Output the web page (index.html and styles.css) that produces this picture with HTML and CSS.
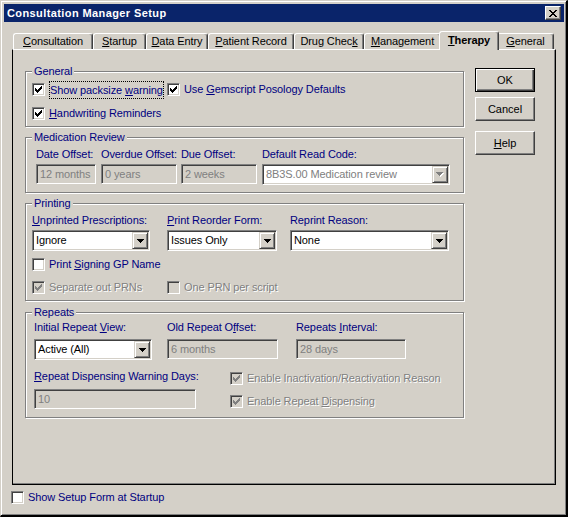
FILE: index.html
```html
<!doctype html>
<html>
<head>
<meta charset="utf-8">
<title>Consultation Manager Setup</title>
<link rel="stylesheet" href="styles.css">
</head>
<body>
<div class="window">
    <div class="titlebar">
        <span class="caption">Consultation Manager Setup</span>
        <span class="close"><svg class="glyph" width="8" height="7"><use href="#cross"/></svg></span>
    </div>

    <div class="tabs">
        <div class="tab"><u>C</u>onsultation</div>
        <div class="tab"><u>S</u>tartup</div>
        <div class="tab"><u>D</u>ata Entry</div>
        <div class="tab"><u>P</u>atient Record</div>
        <div class="tab">Drug Chec<u>k</u></div>
        <div class="tab"><u>M</u>anagement</div>
        <div class="tab active"><u>T</u>herapy</div>
        <div class="tab"><u>G</u>eneral</div>
    </div>

    <div class="panel">
        <div class="groups">
            <!-- General -->
            <fieldset class="group general">
                <legend>General</legend>
                <div class="row cols-135">
                    <div class="check"><span class="box"><svg class="glyph" width="7" height="7"><use href="#tick"/></svg></span><span class="focus">Show packsize <u>w</u>arning</span></div>
                    <div class="check"><span class="box"><svg class="glyph" width="7" height="7"><use href="#tick"/></svg></span><span>Use <u>G</u>emscript Posology Defaults</span></div>
                </div>
                <div class="row next">
                    <div class="check"><span class="box"><svg class="glyph" width="7" height="7"><use href="#tick"/></svg></span><span><u>H</u>andwriting Reminders</span></div>
                </div>
            </fieldset>

            <!-- Medication Review -->
            <fieldset class="group review">
                <legend>Medication Review</legend>
                <div class="fields review-cols">
                    <div class="field"><span class="label">Date Offset:</span><span class="edit off w60">12 months</span></div>
                    <div class="field"><span class="label">Overdue Offset:</span><span class="edit off w76">0 years</span></div>
                    <div class="field"><span class="label">Due Offset:</span><span class="edit off w76">2 weeks</span></div>
                    <div class="field">
                        <span class="label">Default Read Code:</span>
                        <span class="combo off w188">
                            <span class="value">8B3S.00 Medication review</span>
                            <span class="drop"><svg class="glyph" width="8" height="5"><use href="#arrow" class="shade"/><use href="#arrow"/></svg></span>
                        </span>
                    </div>
                </div>
            </fieldset>

            <!-- Printing -->
            <fieldset class="group printing">
                <legend>Printing</legend>
                <div class="fields printing-cols">
                    <div class="field">
                        <span class="label"><u>U</u>nprinted Prescriptions:</span>
                        <span class="combo w118"><span class="value">Ignore</span><span class="drop"><svg class="glyph" width="7" height="4"><use href="#arrow"/></svg></span></span>
                    </div>
                    <div class="field">
                        <span class="label"><u>P</u>rint Reorder Form:</span>
                        <span class="combo w110"><span class="value">Issues Only</span><span class="drop"><svg class="glyph" width="7" height="4"><use href="#arrow"/></svg></span></span>
                    </div>
                    <div class="field">
                        <span class="label">Reprint Reason:</span>
                        <span class="combo w159"><span class="value">None</span><span class="drop"><svg class="glyph" width="7" height="4"><use href="#arrow"/></svg></span></span>
                    </div>
                </div>
                <div class="row signing">
                    <div class="check"><span class="box"></span><span>Print <u>S</u>igning GP Name</span></div>
                </div>
                <div class="row cols-135 prn">
                    <div class="check off"><span class="box"><svg class="glyph" width="7" height="7"><use href="#tick"/></svg></span><span>Separate out PRNs</span></div>
                    <div class="check off"><span class="box"></span><span>One PRN per script</span></div>
                </div>
            </fieldset>

            <!-- Repeats -->
            <fieldset class="group repeats">
                <legend>Repeats</legend>
                <div class="fields repeats-cols">
                    <div class="field">
                        <span class="label">Initial Repeat <u>V</u>iew:</span>
                        <span class="combo w118"><span class="value">Active (All)</span><span class="drop"><svg class="glyph" width="7" height="4"><use href="#arrow"/></svg></span></span>
                    </div>
                    <div class="field"><span class="label">Old Repeat O<u>f</u>fset:</span><span class="edit off w111">6 months</span></div>
                    <div class="field"><span class="label">Repeats <u>I</u>nterval:</span><span class="edit off w110">28 days</span></div>
                </div>
                <div class="fields dispensing-cols">
                    <div class="field"><span class="label"><u>R</u>epeat Dispensing Warning Days:</span><span class="edit off w162">10</span></div>
                    <div class="checks">
                        <div class="check off"><span class="box"><svg class="glyph" width="7" height="7"><use href="#tick"/></svg></span><span>Enable Inactivation/Reactivation Reason</span></div>
                        <div class="check off"><span class="box"><svg class="glyph" width="7" height="7"><use href="#tick"/></svg></span><span>Enable Repeat <u>D</u>ispensing</span></div>
                    </div>
                </div>
            </fieldset>
        </div>

        <div class="buttons">
            <div class="btn default">OK</div>
            <div class="btn">Cancel</div>
            <div class="btn help"><span><u>H</u>elp</span></div>
        </div>
    </div>

    <div class="check startup"><span class="box"></span><span>Show Setup Form at Startup</span></div>
</div>

<svg class="defs">
    <symbol id="tick" viewBox="0 0 7 7"><path d="M0 2h1v3H0z M1 3h1v3H1z M2 4h1v3H2z M3 3h1v3H3z M4 2h1v3H4z M5 1h1v3H5z M6 0h1v3H6z"/></symbol>
    <symbol id="arrow" viewBox="0 0 7 4" width="7" height="4"><path d="M0 0h7v1H6v1H5v1H4v1H3V3H2V2H1V1H0z"/></symbol>
    <symbol id="cross" viewBox="0 0 8 7"><path d="M0 0h2v1H0z M6 0h2v1H6z M1 1h2v1H1z M5 1h2v1H5z M2 2h4v1H2z M3 3h2v1H3z M2 4h4v1H2z M1 5h2v1H1z M5 5h2v1H5z M0 6h2v1H0z M6 6h2v1H6z"/></symbol>
</svg>
</body>
</html>
```

FILE: styles.css
```css
*{
    margin: 0;
    padding: 0;
    box-sizing: border-box;
}
body{
    background: #d4d0c8;
    font: 11px/13px "Liberation Sans", Arial, sans-serif;
    letter-spacing: -0.1px;
    color: #000;
}
.defs{display: none;}
.glyph{
    display: block;
    fill: currentColor;
    shape-rendering: crispEdges;
}

/* window frame */
.window{
    width: 568px;
    height: 517px;
    padding: 3px 2px 0 3px;
    border-style: solid;
    border-width: 1px 2px 2px 1px;
    border-color: #d4d0c8 #000 #000 #d4d0c8;
    box-shadow: inset 1px 1px #fff, inset -1px -1px #808080;
}
.titlebar{
    display: flex;
    align-items: center;
    justify-content: space-between;
    height: 18px;
    padding: 0 3px;
    background: #0a246a;
}
.caption{
    color: #fff;
    font-weight: bold;
    letter-spacing: 0.4px;
}
.close{
    display: flex;
    align-items: center;
    justify-content: center;
    width: 16px;
    height: 14px;
    background: #d4d0c8;
    border: 1px solid;
    border-color: #fff #404040 #404040 #fff;
    box-shadow: inset -1px -1px #808080;
}

/* tabs */
.tabs{
    display: flex;
    height: 19px;
    margin: 9px 0 0 9px;
}
.tab{
    height: 16px;
    margin-top: 2px;
    border: 1px solid;
    border-bottom: 0;
    border-color: #fff #404040 #fff #fff;
    border-radius: 3px 3px 0 0;
    box-shadow: inset -1px 0 #808080;
    background: #d4d0c8;
    text-align: center;
    line-height: 14px;
}
.tab.active{
    position: relative;
    z-index: 1;
    height: 19px;
    margin: 0 -2px;
    padding-top: 1px;
    font-weight: bold;
}
.tab:nth-child(1){width: 80px;}
.tab:nth-child(2){width: 53px;}
.tab:nth-child(3){width: 62px;}
.tab:nth-child(4){width: 86px;}
.tab:nth-child(5){width: 70px;}
.tab:nth-child(6){width: 77px;}
.tab:nth-child(7){width: 60px;}
.tab:nth-child(8){width: 57px;}

.panel{
    display: flex;
    gap: 11px;
    width: 544px;
    height: 436px;
    margin: -1px 0 0 8px;
    padding: 15px 0 0 12px;
    border: 1px solid #000;
    border-top-color: #fff;
    box-shadow: inset -1px -1px #808080;
}
.groups{width: 439px;}

/* group boxes */
.group{
    min-width: 0;
    border: 1px solid #808080;
    box-shadow: inset 1px 1px #fff, 1px 1px #fff;
}
.group + .group{margin-top: 4px;}
.group legend{
    margin-left: 6px;
    padding: 0 2px;
    line-height: 13px;
    color: #000080;
    background: #d4d0c8;
}
.general{padding: 3px 0 4px;}
.review{padding: 4px 0 7px;}
.printing{padding: 4px 0 4px;}
.printing + .repeats{margin-top: 5px;}
.repeats{padding: 2px 0 7px;}

.general .row,
.printing .row,
.printing .fields{margin-left: 6px;}
.review .fields{margin-left: 10px;}
.repeats .fields{margin-left: 8px;}

.row{display: flex;}
.cols-135{
    display: grid;
    grid-template-columns: 135px auto;
}
.general .next{margin-top: 7px;}
.signing{margin-top: 5px;}
.prn{margin-top: 6px;}

.fields{display: grid;}
.review-cols{grid-template-columns: 65px 80px 81px 188px;}
.printing-cols{grid-template-columns: 135px 123px 159px;}
.repeats-cols{grid-template-columns: 133px 129px 110px;}
.dispensing-cols{
    grid-template-columns: 196px auto;
    margin-top: 10px;
}
.field{
    display: flex;
    flex-direction: column;
    align-items: flex-start;
    gap: 3px;
}
.repeats-cols .field{gap: 5px;}
.dispensing-cols .field{gap: 6px;}
.checks{
    display: flex;
    flex-direction: column;
    gap: 6px;
}
.label{
    color: #000080;
    white-space: nowrap;
}

/* checkboxes */
.check{
    display: flex;
    align-items: center;
    gap: 4px;
    height: 17px;
    color: #000080;
    white-space: nowrap;
}
.box{
    width: 13px;
    height: 13px;
    padding: 2px;
    border: 1px solid;
    border-color: #808080 #fff #fff #808080;
    box-shadow: inset 1px 1px #404040, inset -1px -1px #d4d0c8;
    background: #fff;
    color: #000;
    flex: none;
}
.focus{
    height: 18px;
    line-height: 16px;
    border: 1px dotted #000;
}
.check.off{
    color: #808080;
    text-shadow: 1px 1px 0 #fff;
}
.check.off .box{
    background: #d4d0c8;
    color: #808080;
}
.startup{margin: 4px 0 0 7px;}

/* edits and combos */
.edit,
.combo{
    display: flex;
    border: 1px solid;
    border-color: #808080 #fff #fff #808080;
    box-shadow: inset 1px 1px #404040, inset -1px -1px #d4d0c8;
    white-space: nowrap;
}
.edit{
    height: 20px;
    padding-left: 3px;
    line-height: 18px;
    background: #fff;
}
.edit.off{
    background: #d4d0c8;
    color: #808080;
}
.combo{
    height: 21px;
    padding: 1px;
    background: #fff;
}
.combo .value{
    flex: 1;
    padding-left: 2px;
    line-height: 17px;
    overflow: hidden;
}
.combo.off .value{color: #808080;}
.drop{
    display: flex;
    align-items: center;
    justify-content: center;
    width: 16px;
    height: 17px;
    flex: none;
    background: #d4d0c8;
    border: 1px solid;
    border-color: #d4d0c8 #404040 #404040 #d4d0c8;
    box-shadow: inset 1px 1px #fff, inset -1px -1px #808080;
}
.combo.off .drop{color: #808080;}
.combo.off .drop use{fill: #808080;}
.combo.off .drop .shade{
    fill: #fff;
    transform: translate(1px, 1px);
}
.w60{width: 60px;}
.w76{width: 76px;}
.w110{width: 110px;}
.w111{width: 111px;}
.w118{width: 118px;}
.w159{width: 159px;}
.w162{width: 162px;}
.w188{width: 188px;}

/* buttons */
.buttons{
    display: flex;
    flex-direction: column;
    width: 60px;
    padding-top: 3px;
}
.btn{
    display: flex;
    align-items: center;
    justify-content: center;
    height: 24px;
    border: 1px solid;
    border-color: #fff #404040 #404040 #fff;
    box-shadow: inset -1px -1px #808080;
    letter-spacing: 0;
}
.btn + .btn{margin-top: 5px;}
.btn.help{margin-top: 10px;}
.btn.default{
    border-color: #000;
    box-shadow: inset 1px 1px #fff, inset -1px -1px #404040, inset -2px -2px #808080;
}
```
